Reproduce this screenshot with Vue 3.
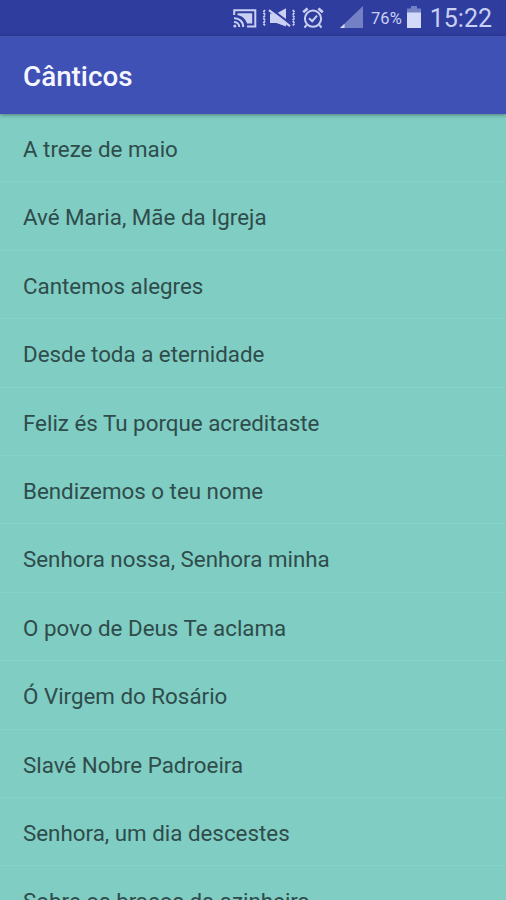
<template>
  <div class="screen">
    <header class="status-bar">
      <svg class="cast" viewBox="0 0 24 19" width="24" height="19">
        <path d="M1.2 6V1.2H22.3V17.5H14" />
        <path d="M4.5 4.3H19.2V14.5H14C12.5 9.5 9 6.8 4.5 6.2Z" class="solid" />
        <path d="M1 9.2A8.6 8.6 0 0 1 10.2 18M1 13A5 5 0 0 1 6.3 18" />
        <circle cx="1.9" cy="17" r="1.5" class="solid" />
      </svg>

      <svg class="mute" viewBox="0 0 34 22" width="34" height="22">
        <path d="M3 3l-1.8 2.2L3.2 8 1.2 10.8 3.2 13.6 1.2 16.4 3 18.5" class="wave" />
        <path d="M30.8 3l1.8 2.2L30.6 8l2 2.8-2 2.8 2 2.8-1.8 2.1" class="wave" />
        <path d="M8 6.5H14.5L24 1.2V19.6L14.5 16H8Z" class="solid" />
        <path d="M8.5 1.6L29.5 17.6" class="gap" />
        <path d="M7 3.2L28 19.2" class="slash" />
      </svg>

      <svg class="alarm" viewBox="0 0 22 22" width="22" height="22">
        <circle cx="11" cy="11.7" r="8.1" />
        <path d="M1.2 5.3L5.6 1.5M20.8 5.3L16.4 1.5" class="bell" />
        <path d="M4.6 18L2.5 20.6M17.4 18L19.5 20.6" />
        <path d="M7 11.2L10.2 14.2L15 8.7" />
      </svg>

      <svg class="signal" viewBox="0 0 23 22" width="23" height="22">
        <path d="M0 22L23 0V22Z" class="weak" />
        <path d="M0 22L4.5 17.7V22Z" class="strong" />
      </svg>

      <span class="percent">76%</span>

      <svg class="battery" viewBox="0 0 14 22" width="14" height="22">
        <path d="M4 0H10V2.4H14V7H0V2.4H4Z" class="weak" />
        <path d="M0 6.5H14V22H0Z" class="strong" />
      </svg>

      <time class="clock">15:22</time>
    </header>

    <div class="app-bar">
      <h1>{{ title }}</h1>
    </div>

    <ul class="list">
      <li v-for="song in songs" :key="song">{{ song }}</li>
    </ul>
  </div>
</template>

<script setup>
const title = 'Cânticos'

const songs = [
  'A treze de maio',
  'Avé Maria, Mãe da Igreja',
  'Cantemos alegres',
  'Desde toda a eternidade',
  'Feliz és Tu porque acreditaste',
  'Bendizemos o teu nome',
  'Senhora nossa, Senhora minha',
  'O povo de Deus Te aclama',
  'Ó Virgem do Rosário',
  'Slavé Nobre Padroeira',
  'Senhora, um dia descestes',
  'Sobre os braços da azinheira',
]
</script>

<style>
body { margin: 0; }
</style>

<style scoped>
.screen {
  display: flex;
  flex-direction: column;
  width: 100%;
  height: 900px;
  overflow: hidden;
  background: #80cdc3;
  font-family: Roboto, "Liberation Sans", sans-serif;
}

/* barra de estado */
.status-bar {
  flex: none;
  box-sizing: border-box;
  display: flex;
  align-items: center;
  justify-content: flex-end;
  height: 36px;
  padding-right: 14px;
  background: #2f3d9e;
  color: #c9d0f4;
}
.status-bar svg {
  flex: none;
  fill: none;
  stroke: #c9d0f4;
  stroke-width: 2;
}
.status-bar .solid { fill: #c9d0f4; stroke: none; }
.status-bar .wave { stroke-width: 1.8; stroke-dasharray: 2.6 .8; }
.status-bar .gap { stroke: #2f3d9e; stroke-width: 2; }
.status-bar .slash { stroke-width: 2.2; }
.status-bar .bell { stroke-width: 2.8; }
.status-bar .weak { fill: #7480c4; stroke: none; }
.status-bar .strong { fill: #d3d9f8; stroke: none; }
.mute { margin-left: 5px; }
.alarm { margin-left: 6px; }
.signal { margin: 0 0 2px 16px; }
.percent { margin-left: 8px; padding-top: 2px; font-size: 16.5px; line-height: 36px; }
.battery { margin: 0 0 2px 5px; }
.clock { margin-left: 9px; padding-top: 2px; font-size: 25px; line-height: 36px; }

/* barra da aplicação */
.app-bar {
  flex: none;
  display: flex;
  align-items: center;
  position: relative;
  height: 78px;
  padding-left: 23px;
  background: #3f51b5;
  box-shadow: 0 1px 4px rgba(0, 0, 0, .4);
}
h1 {
  margin: 0;
  padding-top: 3px;
  color: #f5f6ff;
  font-size: 27.8px;
  font-weight: 500;
  line-height: 34px;
}

.list {
  margin: 0;
  padding: 0;
  list-style: none;
}
.list li {
  box-sizing: border-box;
  height: 68.4px;
  padding-left: 23px;
  border-bottom: 1px solid #8ad2c9;
  color: #2f4c4b;
  font-size: 22.35px;
  line-height: 70px;
  white-space: nowrap;
}
</style>
